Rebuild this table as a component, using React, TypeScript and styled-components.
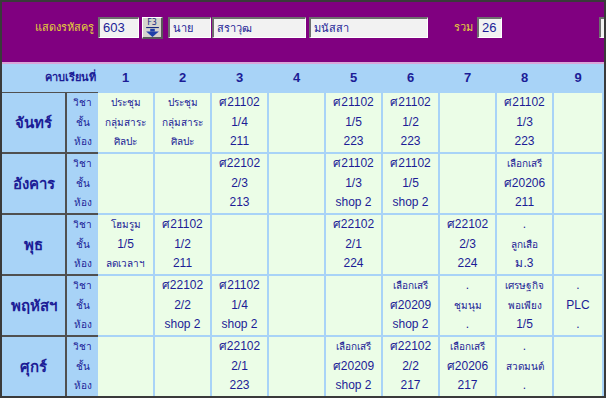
import React from "react";
import styled, { createGlobalStyle } from "styled-components";

const Global = createGlobalStyle`
  html, body { margin: 0; padding: 0; background: #ffffff; }
  body { font-family: "Liberation Sans", "Noto Sans", sans-serif; }
`;

const SKY = "#a8d3f7";
const GREEN = "#ebfde7";
const NAVY = "#1c1c96";
const DARK = "#505050";

const Frame = styled.div`
  width: 606px;
  height: 398px;
  box-sizing: border-box;
  border: 2px solid #3a3a3a;
  overflow: hidden;
  background: ${SKY};
`;

const TopBar = styled.div`
  height: 45px;
  background: #800080;
  border-bottom: 2px solid #d9a6d9;
  display: flex;
  align-items: flex-start;
  padding: 15px 0 0 33px;
  box-sizing: content-box;
`;

const Label = styled.span<{ $ml?: number; $w: number }>`
  color: #e6d23a;
  font-size: 11px;
  line-height: 21px;
  width: ${(p) => p.$w}px;
  margin-left: ${(p) => p.$ml ?? 0}px;
  white-space: nowrap;
  flex-shrink: 0;
`;

const Field = styled.div<{ $w: number; $ml?: number; $big?: boolean }>`
  width: ${(p) => p.$w}px;
  height: 21px;
  box-sizing: border-box;
  margin-left: ${(p) => p.$ml ?? 0}px;
  background: #f2f2f2;
  border-top: 2px solid #6e6e6e;
  border-left: 2px solid #6e6e6e;
  border-bottom: 1px solid #ffffff;
  border-right: 1px solid #ffffff;
  color: ${NAVY};
  font-size: ${(p) => (p.$big ? 13 : 11)}px;
  line-height: 18px;
  padding-left: 3px;
  white-space: nowrap;
  overflow: hidden;
  flex-shrink: 0;
`;

const KeyButton = styled.div`
  width: 21px;
  height: 22px;
  box-sizing: border-box;
  margin-left: 3px;
  background: #d6d3ce;
  border-top: 1px solid #ffffff;
  border-left: 1px solid #ffffff;
  border-right: 2px solid #5a5a5a;
  border-bottom: 2px solid #5a5a5a;
  display: flex;
  flex-direction: column;
  align-items: center;
  padding-top: 1px;
  flex-shrink: 0;
`;

const KeyText = styled.span`
  font-size: 8px;
  line-height: 8px;
  color: #1a2a80;
  font-family: "DejaVu Sans", sans-serif;
`;

const Grid = styled.div`
  display: grid;
  grid-template-columns: 65px 31px repeat(8, 57px) 1fr;
  grid-template-rows: 29px repeat(5, 61px);
`;

const HeadTitle = styled.div`
  grid-column: span 2;
  background: ${SKY};
  border-bottom: 1px solid ${DARK};
  color: ${NAVY};
  font-weight: bold;
  font-size: 11px;
  display: flex;
  align-items: center;
  justify-content: flex-end;
  padding-right: 2px;
  padding-bottom: 2px;
`;

const HeadNum = styled.div`
  background: ${SKY};
  color: ${NAVY};
  font-weight: bold;
  font-size: 13px;
  display: flex;
  align-items: center;
  justify-content: center;
  padding-bottom: 2px;
  padding-right: 2px;
`;

const DayCell = styled.div`
  background: ${SKY};
  border-right: 2px solid ${DARK};
  border-bottom: 2px solid ${DARK};
  color: ${NAVY};
  font-weight: bold;
  font-size: 15px;
  display: flex;
  align-items: center;
  justify-content: center;
`;

const LabelCell = styled.div`
  background: ${SKY};
  border-bottom: 2px solid ${DARK};
  display: flex;
  flex-direction: column;
  justify-content: center;
  align-items: center;
`;

const Line = styled.div<{ $small?: boolean }>`
  height: 19.5px;
  line-height: 19.5px;
  font-size: ${(p) => (p.$small ? 10 : 12)}px;
  color: ${NAVY};
  white-space: nowrap;
  text-align: center;
`;

const PeriodCell = styled.div`
  background: ${GREEN};
  border-right: 2px solid ${SKY};
  border-bottom: 2px solid ${SKY};
  display: flex;
  flex-direction: column;
  justify-content: center;
  align-items: center;
  overflow: hidden;
`;

type Slot = string[];

const days: { name: string; slots: Slot[] }[] = [
  {
    name: "จันทร์",
    slots: [
      ["ประชุม", "กลุ่มสาระ", "ศิลปะ"],
      ["ประชุม", "กลุ่มสาระ", "ศิลปะ"],
      ["ศ21102", "1/4", "211"],
      [],
      ["ศ21102", "1/5", "223"],
      ["ศ21102", "1/2", "223"],
      [],
      ["ศ21102", "1/3", "223"],
      [],
    ],
  },
  {
    name: "อังคาร",
    slots: [
      [],
      [],
      ["ศ22102", "2/3", "213"],
      [],
      ["ศ21102", "1/3", "shop 2"],
      ["ศ21102", "1/5", "shop 2"],
      [],
      ["เลือกเสรี", "ศ20206", "211"],
      [],
    ],
  },
  {
    name: "พุธ",
    slots: [
      ["โฮมรูม", "1/5", "ลดเวลาฯ"],
      ["ศ21102", "1/2", "211"],
      [],
      [],
      ["ศ22102", "2/1", "224"],
      [],
      ["ศ22102", "2/3", "224"],
      [".", "ลูกเสือ", "ม.3"],
      [],
    ],
  },
  {
    name: "พฤหัสฯ",
    slots: [
      [],
      ["ศ22102", "2/2", "shop 2"],
      ["ศ21102", "1/4", "shop 2"],
      [],
      [],
      ["เลือกเสรี", "ศ20209", "shop 2"],
      [".", "ชุมนุม", "."],
      ["เศรษฐกิจ", "พอเพียง", "1/5"],
      [".", "PLC", "."],
    ],
  },
  {
    name: "ศุกร์",
    slots: [
      [],
      [],
      ["ศ22102", "2/1", "223"],
      [],
      ["เลือกเสรี", "ศ20209", "shop 2"],
      ["ศ22102", "2/2", "217"],
      ["เลือกเสรี", "ศ20206", "217"],
      [".", "สวดมนต์", "."],
      [],
    ],
  },
];

const isThai = (s: string) => /[\u0E00-\u0E7F]/.test(s) && !/\d/.test(s);

const DownArrow = () => (
  <svg width="15" height="11" viewBox="0 0 15 11">
    <rect x="0.5" y="0" width="14" height="1.2" fill="#1a2a80" />
    <rect x="5" y="2" width="5" height="3" fill="#1f3fa8" />
    <polygon points="0.5,5 14.5,5 7.5,11" fill="#1f3fa8" />
  </svg>
);

export default function App() {
  return (
    <>
      <Global />
      <Frame>
        <TopBar>
          <Label $w={63}>แสดงรหัสครู</Label>
          <Field $w={41} $big>603</Field>
          <KeyButton>
            <KeyText>F3</KeyText>
            <DownArrow />
          </KeyButton>
          <Field $w={43} $ml={5}>นาย</Field>
          <Field $w={94} $ml={1}>สราวุฒ</Field>
          <Field $w={119} $ml={3}>มนัสสา</Field>
          <Label $w={23} $ml={26}>รวม</Label>
          <Field $w={25} $big>26</Field>
          <Field $w={40} $ml={97}></Field>
        </TopBar>
        <Grid>
          <HeadTitle>คาบเรียนที่</HeadTitle>
          {[1, 2, 3, 4, 5, 6, 7, 8, 9].map((n) => (
            <HeadNum key={n}>{n}</HeadNum>
          ))}
          {days.map((d) => (
            <React.Fragment key={d.name}>
              <DayCell>{d.name}</DayCell>
              <LabelCell>
                <Line $small>วิชา</Line>
                <Line $small>ชั้น</Line>
                <Line $small>ห้อง</Line>
              </LabelCell>
              {d.slots.map((s, i) => (
                <PeriodCell key={i}>
                  {s.map((t, j) => (
                    <Line key={j} $small={isThai(t)}>
                      {t}
                    </Line>
                  ))}
                </PeriodCell>
              ))}
            </React.Fragment>
          ))}
        </Grid>
      </Frame>
    </>
  );
}
